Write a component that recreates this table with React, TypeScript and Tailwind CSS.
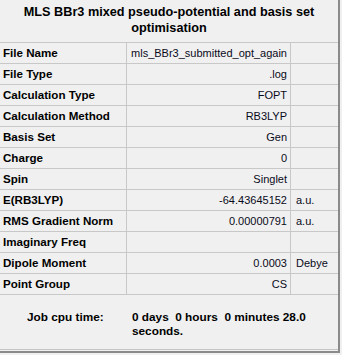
const rows: [string, string, string][] = [
  ["File Name", "mls_BBr3_submitted_opt_again", ""],
  ["File Type", ".log", ""],
  ["Calculation Type", "FOPT", ""],
  ["Calculation Method", "RB3LYP", ""],
  ["Basis Set", "Gen", ""],
  ["Charge", "0", ""],
  ["Spin", "Singlet", ""],
  ["E(RB3LYP)", "-64.43645152", "a.u."],
  ["RMS Gradient Norm", "0.00000791", "a.u."],
  ["Imaginary Freq", "", ""],
  ["Dipole Moment", "0.0003", "Debye"],
  ["Point Group", "CS", ""],
];

export default function App() {
  return (
    <div className="w-[342px] h-[355px] bg-[#f0f0f0] font-['Liberation_Sans',Arial,sans-serif] text-[11px] text-[#0a0a1a]">
      <div className="w-[340px] h-[353px] border-r-2 border-b-2 border-[#8a8a8a]">
        <div className="w-[338px] h-[350px] border-b border-[#c4c4c4]">
          {/* summary title */}
          <div className="h-[42px] pt-[4px] text-center font-bold text-[12.7px] leading-[16px] text-black">
            <div>MLS BBr3 mixed pseudo-potential and basis set</div>
            <div>optimisation</div>
          </div>

          {/* property grid */}
          <div className="grid grid-cols-[126px_163px_47px] gap-px bg-[#c8c8c8] border-y border-[#c8c8c8]">
            {rows.map(([label, value, unit]) => (
              <div key={label} className="contents">
                <div className="h-[20px] bg-[#f0f0f0] pl-[3px] leading-[20px] font-bold text-[11.6px] text-black whitespace-nowrap">
                  {label}
                </div>
                <div className="h-[20px] bg-[#f0f0f0] pr-[3px] leading-[20px] text-right whitespace-nowrap">
                  {value}
                </div>
                <div className="h-[20px] bg-[#f0f0f0] pl-[5px] leading-[20px] whitespace-nowrap">
                  {unit}
                </div>
              </div>
            ))}
          </div>

          {/* cpu time */}
          <div className="flex pt-[15px] font-bold text-[11.8px] text-black leading-[14px]">
            <div className="w-[132px] pl-[27px]">Job cpu time:</div>
            <div className="w-[195px]">0 days&nbsp; 0 hours&nbsp; 0 minutes 28.0 seconds.</div>
          </div>
        </div>
      </div>
    </div>
  );
}
